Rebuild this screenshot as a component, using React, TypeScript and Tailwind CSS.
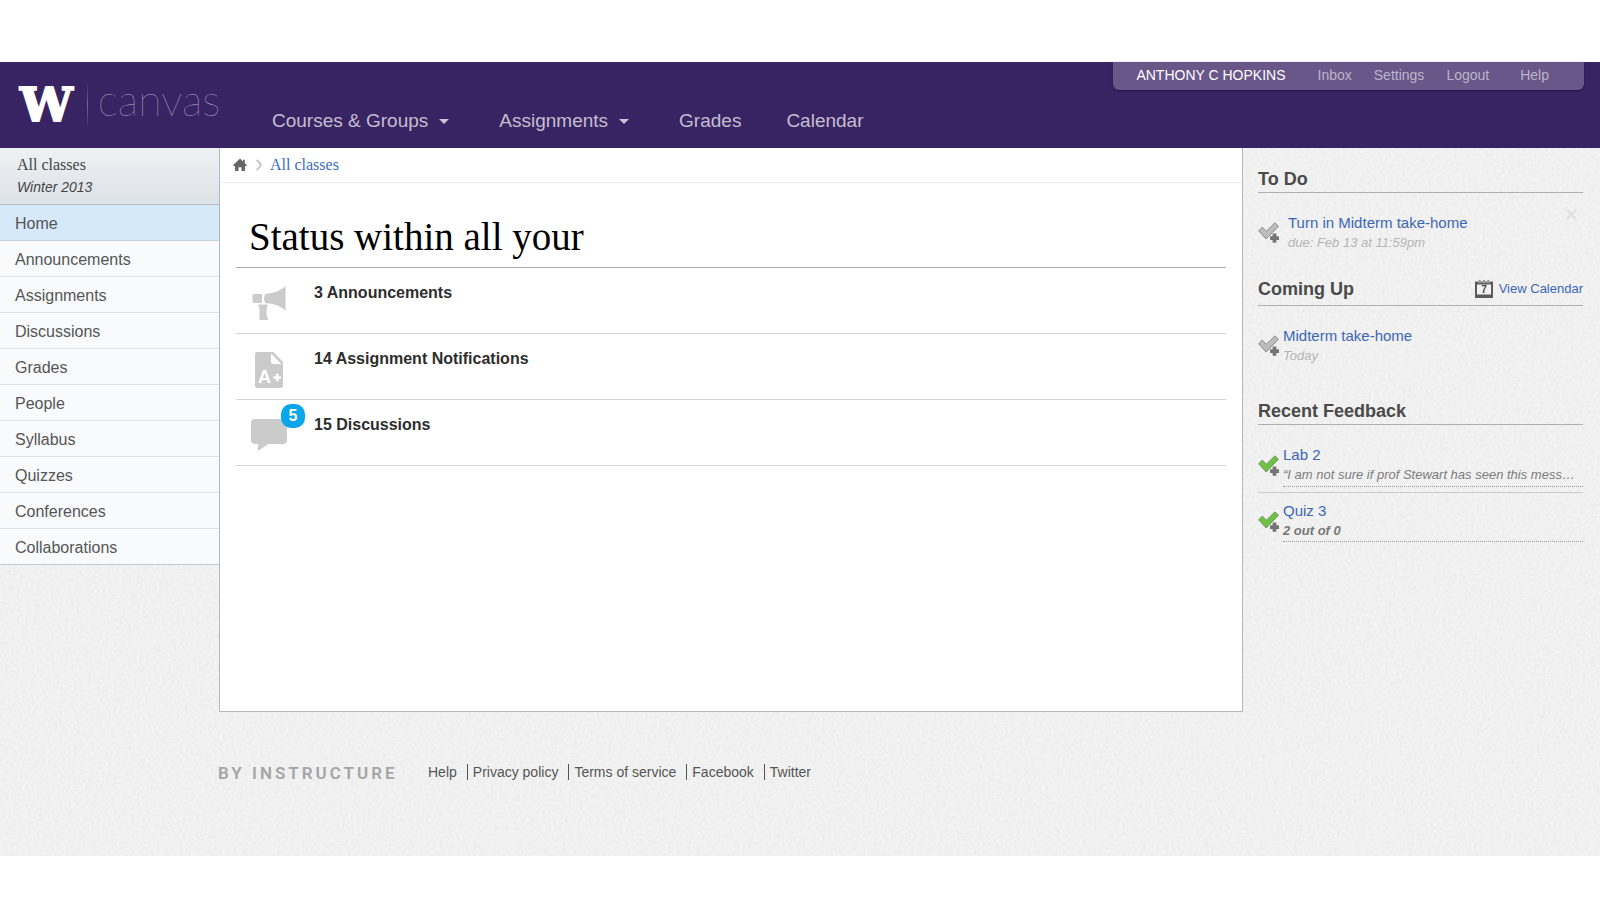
import React from "react";

const sections = [
  "Home",
  "Announcements",
  "Assignments",
  "Discussions",
  "Grades",
  "People",
  "Syllabus",
  "Quizzes",
  "Conferences",
  "Collaborations",
];

const footerLinks = ["Help", "Privacy policy", "Terms of service", "Facebook", "Twitter"];

function PaperGrain() {
  return (
    <svg className="absolute inset-0 -z-10 h-full w-full" aria-hidden="true">
      <filter id="grain" x="0" y="0" width="100%" height="100%" colorInterpolationFilters="sRGB">
        <feTurbulence type="fractalNoise" baseFrequency="0.35" numOctaves="2" seed="4" />
        <feColorMatrix values="0.06 0 0 0 0.913  0.06 0 0 0 0.913  0.06 0 0 0 0.913  0 0 0 0 1" />
      </filter>
      <rect width="100%" height="100%" filter="url(#grain)" />
    </svg>
  );
}

function Caret() {
  return (
    <svg width="10" height="5" viewBox="0 0 10 5" aria-hidden="true">
      <path d="M0 0h10L5 5z" fill="#c9c4d6" />
    </svg>
  );
}

function HomeIcon() {
  return (
    <svg width="14" height="14" viewBox="0 0 14 14" aria-hidden="true">
      <path d="M7 .5 10 3.4V1.8h1.8v3.4L13.7 7v.9H12V13H8.5V9.3h-3V13H2V7.900H.3V7z" fill="#666" />
    </svg>
  );
}

function CrumbChevron() {
  return (
    <svg width="8" height="12" viewBox="0 0 8 12" aria-hidden="true">
      <path d="M1.500 1c2 1.200 3.500 3 4.300 5-.8 2-2.300 3.800-4.300 5" fill="none" stroke="#c4c4c4" strokeWidth="2" />
    </svg>
  );
}

function MegaphoneIcon() {
  return (
    <svg width="36" height="36" viewBox="0 0 36 36" fill="#cbcbcb" aria-hidden="true">
      <path d="M3 8h8v9H3a1.500 1.500 0 0 1-1.500-1.500v-6A1.500 1.500 0 0 1 3 8z" />
      <path d="M14.500 7.700C22 7.500 29 5 34.500 0v24.500c-5-4.500-12-7.200-20-7.300-2-2.800-2-6.700 0-9.500z" />
      <path d="M7 18.500h9.500c.5 1.800-.9 3-.9 5v7l1.300 1.600V34H8.500V22z" />
    </svg>
  );
}

function GradedPaperIcon() {
  return (
    <svg width="36" height="36" viewBox="0 0 36 36" aria-hidden="true">
      <path d="M6 0h16.500L32 10v23.500a2.500 2.500 0 0 1-2.500 2.500h-23A2.500 2.500 0 0 1 4 33.500V2a2 2 0 0 1 2-2z" fill="#cbcbcb" />
      <path d="M20 1.200 30.200 12H22a2 2 0 0 1-2-2z" fill="#fff" />
      <text x="7" y="31" fontFamily="Liberation Sans, sans-serif" fontWeight="700" fontSize="18" fill="#fff">
        A
      </text>
      <path d="M25 21.800h2.500v2.500H30v2.500h-2.500v2.500H25v-2.500h-2.500v-2.500H25z" fill="#fff" />
    </svg>
  );
}

function BubbleIcon() {
  return (
    <svg width="36" height="36" viewBox="0 0 36 36" fill="#cbcbcb" aria-hidden="true">
      <path d="M4 1h28a4 4 0 0 1 4 4v17a4 4 0 0 1-4 4H17.500L7 33v-7H4a4 4 0 0 1-4-4V5a4 4 0 0 1 4-4z" />
    </svg>
  );
}

function CheckPlusIcon({ done }: { done?: boolean }) {
  return (
    <svg width="21" height="22" viewBox="0 0 21 22" className="shrink-0" aria-hidden="true">
      <path
        d="M.7 8.700 4.300 5.200l4 4L17 .8l3.400 3.500L8.100 17z"
        fill={done ? "#6cc243" : "#bdbdbd"}
        stroke={done ? "#779068" : "#8a8a8a"}
        strokeWidth="1"
      />
      <path d="M14.600 11.500h3.800v2.800H21v3.600h-2.600v2.800h-3.800v-2.800H12v-3.600h2.600z" fill="#757575" />
    </svg>
  );
}

function CalendarIcon() {
  return (
    <svg width="18" height="18" viewBox="0 0 18 18" aria-hidden="true">
      <path d="M0 1.500h18V18H0z" fill="#5c5c5c" />
      <path d="M2 4.500h14V14.500H2z" fill="#f3f3f3" />
      <path d="M3.500 0h2.500v2.500H3.500zM7.800 0h2.500v2.500H7.800zM12 0h2.500v2.500H12z" fill="#8d8580" stroke="#f1f1f1" strokeWidth=".4" />
      <text x="9" y="13" textAnchor="middle" fontFamily="Liberation Sans, sans-serif" fontWeight="700" fontSize="10" fill="#444">
        7
      </text>
    </svg>
  );
}

function StatusRow({ icon, badge, children }: { icon: React.ReactNode; badge?: number; children: React.ReactNode }) {
  return (
    <li className="flex h-[66px] border-b border-[#d5d5d5] pl-[15px]">
      <div className="relative w-[63px] pt-[18px]">
        {icon}
        {badge !== undefined && (
          <span className="absolute top-1 left-[30px] size-6 rounded-[10px] bg-[#0ba5ec] text-center text-base leading-6 font-bold text-white">
            {badge}
          </span>
        )}
      </div>
      <a href="#" className="pt-[15px] text-base leading-5 font-bold text-[#2d2d2d]">
        {children}
      </a>
    </li>
  );
}

function SideHeading({ children, action }: { children: React.ReactNode; action?: React.ReactNode }) {
  return (
    <div className={"flex items-center justify-between border-b border-[#aeb0b2] " + (action ? "pb-1" : "pb-px")}>
      <h2 className="text-lg leading-6 font-bold text-[#4a4a4a]">{children}</h2>
      {action}
    </div>
  );
}

export default function App() {
  return (
    <div className="min-h-screen bg-white pt-[62px] pb-11 font-['Liberation_Sans',Arial,sans-serif] text-[#555]">
      <div className="relative isolate bg-[#f0f0f0]">
        <PaperGrain />

        <header className="flex h-[86px] bg-[#392463]">
          <a href="#" className="flex w-[219px] shrink-0 items-center pl-5">
            <span className="mb-0.5 font-['DejaVu_Serif',serif] text-[47px] leading-none font-bold text-white [-webkit-text-stroke:2px_white]">
              W
            </span>
            <span className="ml-[14px] h-12 w-px shrink-0 bg-gradient-to-b from-[#392463] via-[#75659a] to-[#392463]" />
            <span className="mb-3 ml-[10px] font-[Lato,sans-serif] text-[43px] leading-none font-thin text-[#b3a9c8]">canvas</span>
          </a>
          <nav className="flex items-end pb-[15px] pl-[53px] text-[19px] leading-6 text-[#c3bed0]">
            <button className="mr-[50px] flex items-center gap-[11px]">
              Courses &amp; Groups <Caret />
            </button>
            <button className="mr-[50px] flex items-center gap-[11px]">
              Assignments <Caret />
            </button>
            <a href="#" className="mr-[45px]">
              Grades
            </a>
            <a href="#">Calendar</a>
          </nav>
          <ul className="mr-4 ml-auto flex h-7 rounded-b-md bg-[#685788] pr-[35px] pl-[23px] text-sm leading-[26px] text-[#bdb4cc] shadow-[0_1px_2px_#20123d]">
            <li className="mr-8 text-white">
              <a href="#">ANTHONY C HOPKINS</a>
            </li>
            <li className="mr-[22px]">
              <a href="#">Inbox</a>
            </li>
            <li className="mr-[22px]">
              <a href="#">Settings</a>
            </li>
            <li className="mr-[31px]">
              <a href="#">Logout</a>
            </li>
            <li>
              <a href="#">Help</a>
            </li>
          </ul>
        </header>

        <div className="flex min-h-[564px] items-stretch">
          <aside className="w-[219px] shrink-0">
            <div className="h-[57px] border-b border-[#b3b8bd] bg-gradient-to-b from-[#eef1f4] to-[#dde2e7] pt-1.5 pl-[17px] text-[#444]">
              <p className="font-['Liberation_Serif',serif] text-base leading-[22px]">All classes</p>
              <p className="text-sm leading-[22px] italic">Winter 2013</p>
            </div>
            <nav className="border-b border-[#c4c8cc]">
              {sections.map((name, i) => (
                <a
                  key={name}
                  href="#"
                  className={
                    "block h-9 pt-px pl-[15px] text-base leading-9 text-[#555] " +
                    (i === 0 ? "border-b border-[#c7d3dc] bg-[#d5e9fa]" : "border-b border-[#dfe3e7] bg-[#f8fafc] last:h-[35px] last:border-b-0")
                  }
                >
                  {name}
                </a>
              ))}
            </nav>
          </aside>

          <main className="min-w-0 flex-1 border-x border-b border-[#b4b7ba] bg-white">
            <div className="flex h-[35px] items-center border-b border-[#ececec] pl-[13px]">
              <a href="#" aria-label="Home">
                <HomeIcon />
              </a>
              <span className="mr-[7px] ml-2">
                <CrumbChevron />
              </span>
              <a href="#" className="font-['Liberation_Serif',serif] text-base leading-6 text-[#3b6cc4]">
                All classes
              </a>
            </div>
            <div className="px-4 pt-8">
              <h1 className="border-b border-[#aaaaad] pb-2 pl-[13px] font-['Liberation_Serif',serif] text-[39px] leading-[44px] text-black">
                Status within all your
              </h1>
              <ul>
                <StatusRow icon={<MegaphoneIcon />}>3 Announcements</StatusRow>
                <StatusRow icon={<GradedPaperIcon />}>14 Assignment Notifications</StatusRow>
                <StatusRow icon={<BubbleIcon />} badge={5}>
                  15 Discussions
                </StatusRow>
              </ul>
            </div>
          </main>

          <aside className="w-[357px] shrink-0 pt-[19px] pr-[17px] pl-[15px] text-[15px] leading-5">
            <section>
              <SideHeading>To Do</SideHeading>
              <div className="mt-5 flex items-center">
                <CheckPlusIcon />
                <div className="ml-[9px] flex-1">
                  <a href="#" className="block text-[#3c66b5]">
                    Turn in Midterm take-home
                  </a>
                  <p className="text-[13px] text-[#b5b5b5] italic">due: Feb 13 at 11:59pm</p>
                </div>
                <button aria-label="Dismiss" className="mr-1.5 self-start">
                  <svg width="11" height="11" viewBox="0 0 11 11" className="-mt-1" aria-hidden="true">
                    <path d="M1 1l9 9M10 1l-9 9" stroke="#dfdfdf" strokeWidth="2" />
                  </svg>
                </button>
              </div>
            </section>

            <section className="mt-6">
              <SideHeading
                action={
                  <a href="#" className="flex items-center gap-1.5 text-[13px] text-[#3c66b5]">
                    <CalendarIcon />
                    View Calendar
                  </a>
                }
              >
                Coming Up
              </SideHeading>
              <div className="mt-5 flex items-center">
                <CheckPlusIcon />
                <div className="ml-1">
                  <a href="#" className="block text-[#3c66b5]">
                    Midterm take-home
                  </a>
                  <p className="text-[13px] text-[#b5b5b5] italic">Today</p>
                </div>
              </div>
            </section>

            <section className="mt-[33px]">
              <SideHeading>Recent Feedback</SideHeading>
              <div className="mt-5 flex items-center border-b border-[#cccccc] pb-[5px]">
                <CheckPlusIcon done />
                <div className="ml-1 min-w-0 flex-1 border-b border-dotted border-[#999] pb-px">
                  <a href="#" className="block text-[#3c66b5]">
                    Lab 2
                  </a>
                  <p className="text-[13px] text-[#7c7c7c] italic">“I am not sure if prof Stewart has seen this mess…</p>
                </div>
              </div>
              <div className="mt-2 flex items-center">
                <CheckPlusIcon done />
                <div className="ml-1 min-w-0 flex-1 border-b border-dotted border-[#999]">
                  <a href="#" className="block text-[#3c66b5]">
                    Quiz 3
                  </a>
                  <p className="text-[13px] font-bold text-[#777] italic">2 out of 0</p>
                </div>
              </div>
            </section>
          </aside>
        </div>

        <footer className="flex h-36 items-start pt-[49px] pl-[218px]">
          <a href="#" className="w-[210px] font-[Roboto,sans-serif] text-[17px] leading-6 font-semibold tracking-[3px] text-[#a5a5a5]">
            BY INSTRUCTURE
          </a>
          <ul className="flex items-center pt-px text-sm leading-5 text-[#555]">
            {footerLinks.map((label, i) => (
              <li key={label} className="flex items-center pr-[10px]">
                {i > 0 && <span className="mr-[5px] h-4 w-px bg-[#555]" />}
                <a href="#">{label}</a>
              </li>
            ))}
          </ul>
        </footer>
      </div>
    </div>
  );
}
